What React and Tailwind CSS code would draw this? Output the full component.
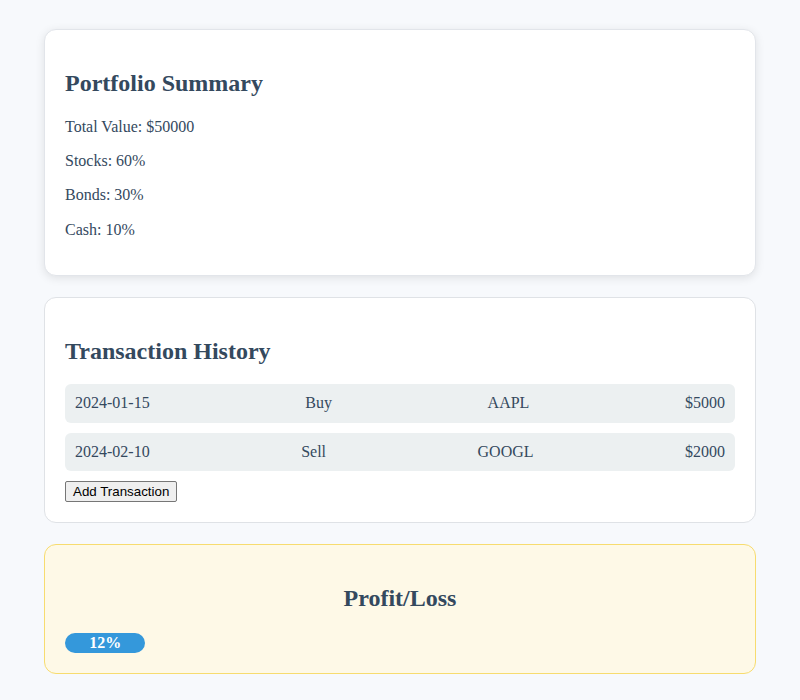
export default function App() {
  const rows = [
    ["2024-01-15", "Buy", "AAPL", "$5000"],
    ["2024-02-10", "Sell", "GOOGL", "$2000"],
  ];
  return (
    <div
      className="min-h-[700px] bg-[#f7f9fc] px-[44px] pt-[29px] pb-[27px] text-[#34495e]"
      style={{ fontFamily: '"Liberation Serif", "Times New Roman", serif' }}
    >
      <div className="flex flex-col gap-[21px]">
        <div className="rounded-xl border border-[#e2e5ea] bg-white px-5 pt-5 pb-5 shadow-[0_2px_10px_rgba(0,0,0,0.1)]">
          <h2 className="mt-5 mb-5 text-[24px] font-bold leading-[27.6px]">Portfolio Summary</h2>
          <p className="mb-4 text-[16px] leading-[18.4px]">Total Value: $50000</p>
          <p className="mb-4 text-[16px] leading-[18.4px]">Stocks: 60%</p>
          <p className="mb-4 text-[16px] leading-[18.4px]">Bonds: 30%</p>
          <p className="mb-4 text-[16px] leading-[18.4px]">Cash: 10%</p>
        </div>

        <div className="rounded-xl border border-[#dfe2e6] bg-white p-5">
          <h2 className="mt-5 mb-5 text-[24px] font-bold leading-[26px]">Transaction History</h2>
          <div className="flex flex-col gap-[10px]">
            {rows.map((r) => (
              <div
                key={r[0]}
                className="flex justify-between rounded-md bg-[#ecf0f1] p-[10px] text-[16px] leading-[18.4px]"
              >
                {r.map((c) => (
                  <span key={c}>{c}</span>
                ))}
              </div>
            ))}
          </div>
          <button
            className="mt-[10px] block h-[21px] rounded-[2px] border border-[#767676] bg-[#efefef] px-[7px] text-[13.33px] leading-[17px] text-black"
            style={{ fontFamily: '"Liberation Sans", Arial, sans-serif' }}
          >
            Add Transaction
          </button>
        </div>

        <div className="rounded-xl border border-[#f7dc6f] bg-[#fef9e7] p-5">
          <h2 className="mt-5 mb-5 text-center text-[24px] font-bold leading-[27.6px]">Profit/Loss</h2>
          <div className="w-full">
            <div className="h-5 w-[12%] rounded-full bg-[#3498db] text-center text-[16px] font-bold leading-5 text-white">
              12%
            </div>
          </div>
        </div>
      </div>
    </div>
  );
}
